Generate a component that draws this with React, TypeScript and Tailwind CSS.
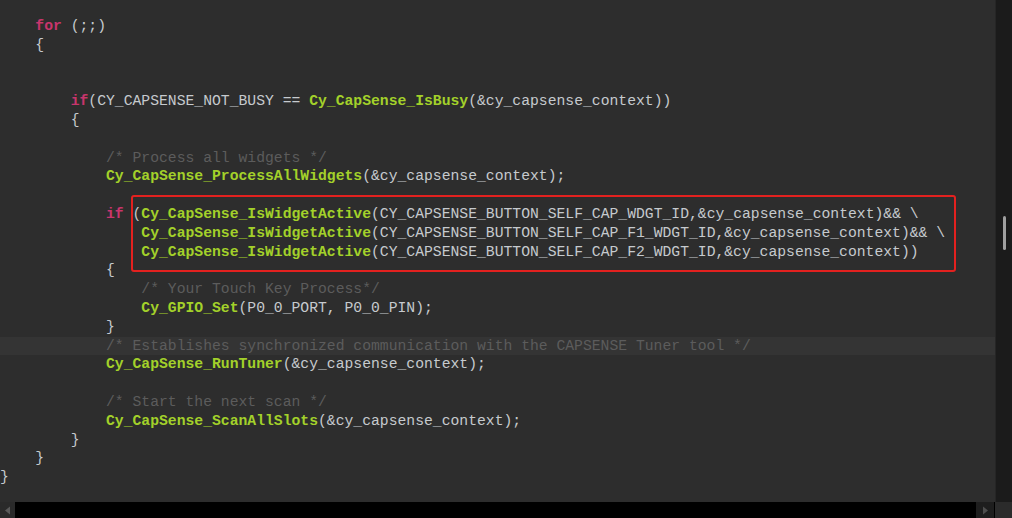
import React from 'react';

// token kinds: k = keyword, f = function, c = comment, t = plain text
type Tok = [string, string];

const K = 'text-[#c8356c] font-bold';
const F = 'text-[#a3d12a] font-bold';
const C = 'text-[#5c5c5c]';
const T = 'text-[#c6cace]';

const colorOf: Record<string, string> = { k: K, f: F, c: C, t: T };

const ctx = '(&cy_capsense_context)';

const lines: Tok[][] = [
  [['t', '    '], ['k', 'for'], ['t', ' (;;)']],
  [['t', '    {']],
  [],
  [],
  [['t', '        '], ['k', 'if'], ['t', '(CY_CAPSENSE_NOT_BUSY == '], ['f', 'Cy_CapSense_IsBusy'], ['t', '(&cy_capsense_context))']],
  [['t', '        {']],
  [],
  [['c', '            /* Process all widgets */']],
  [['t', '            '], ['f', 'Cy_CapSense_ProcessAllWidgets'], ['t', ctx + ';']],
  [],
  [['t', '            '], ['k', 'if'], ['t', ' ('], ['f', 'Cy_CapSense_IsWidgetActive'], ['t', '(CY_CAPSENSE_BUTTON_SELF_CAP_WDGT_ID,&cy_capsense_context)&& \\']],
  [['t', '                '], ['f', 'Cy_CapSense_IsWidgetActive'], ['t', '(CY_CAPSENSE_BUTTON_SELF_CAP_F1_WDGT_ID,&cy_capsense_context)&& \\']],
  [['t', '                '], ['f', 'Cy_CapSense_IsWidgetActive'], ['t', '(CY_CAPSENSE_BUTTON_SELF_CAP_F2_WDGT_ID,&cy_capsense_context))']],
  [['t', '            {']],
  [['c', '                /* Your Touch Key Process*/']],
  [['t', '                '], ['f', 'Cy_GPIO_Set'], ['t', '(P0_0_PORT, P0_0_PIN);']],
  [['t', '            }']],
  [['c', '            /* Establishes synchronized communication with the CAPSENSE Tuner tool */']],
  [['t', '            '], ['f', 'Cy_CapSense_RunTuner'], ['t', ctx + ';']],
  [],
  [['c', '            /* Start the next scan */']],
  [['t', '            '], ['f', 'Cy_CapSense_ScanAllSlots'], ['t', ctx + ';']],
  [['t', '        }']],
  [['t', '    }']],
  [['t', '}']],
];

const CURRENT_LINE = 17;

export default function App() {
  return (
    <div className="w-[1012px] h-[518px] flex flex-col bg-[#2d2d2d] overflow-hidden">
      <div className="flex flex-1 min-h-0">
        {/* editor */}
        <div className="relative flex-1 pt-[17px] font-['Liberation_Mono',monospace] text-[14.73px] leading-[18.8px]">
          {lines.map((toks, i) => (
            <div
              key={i}
              className={`h-[18.8px] whitespace-pre ${i === CURRENT_LINE ? 'bg-[#343434]' : ''}`}
            >
              {toks.map(([kind, text], j) => (
                <span key={j} className={colorOf[kind]}>
                  {text}
                </span>
              ))}
            </div>
          ))}
          {/* red highlight box */}
          <div className="absolute left-[131px] top-[195px] w-[825px] h-[77px] border-[2.5px] border-[#e3211f] rounded-[3px]" />
        </div>
        {/* vertical scrollbar */}
        <div className="w-[17px] bg-[#1b1b1b] border-l border-[#262626] flex flex-col items-center pt-[216px]">
          <div className="w-[3px] h-[34px] bg-[#a0a0a0] rounded-full" />
        </div>
      </div>
      {/* horizontal scrollbar */}
      <div className="h-[16px] flex bg-black">
        <div className="w-[15px] bg-[#2a2a2a] flex items-center justify-center">
          <svg width="7" height="9" viewBox="0 0 7 9">
            <path d="M6 0.5 L1 4.5 L6 8.5 Z" fill="#5a5a5a" />
          </svg>
        </div>
        <div className="flex-1" />
        <div className="w-[18px] bg-[#1e1e1e] flex items-center justify-center">
          <svg width="7" height="9" viewBox="0 0 7 9">
            <path d="M1 0.5 L6 4.5 L1 8.5 Z" fill="#4e4e4e" />
          </svg>
        </div>
        <div className="w-[17px] bg-[#2b2b2b] ml-[1px]" />
      </div>
    </div>
  );
}
